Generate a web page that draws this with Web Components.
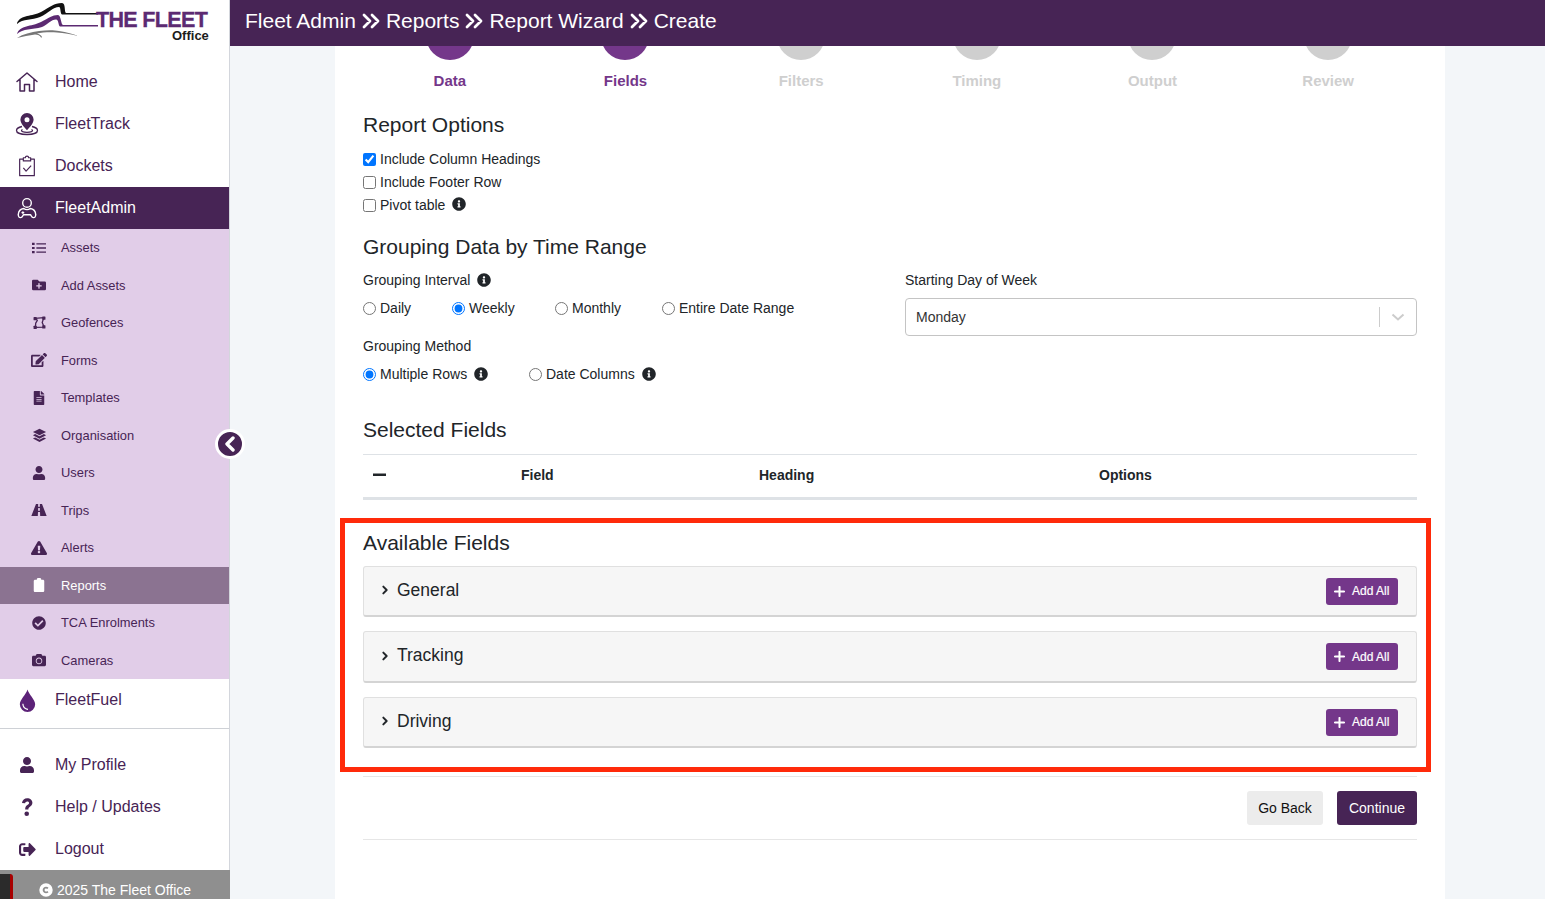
<!DOCTYPE html>
<html lang="en">
<head>
<meta charset="utf-8">
<title>Fleet Admin - Report Wizard</title>
<style>
  html, body { margin: 0; height: 100%; overflow: hidden; }
  body { font-family: "Liberation Sans", Arial, sans-serif; color: #212529; background: #f3f6f9; }
</style>
</head>
<body>
<app-shell>
  <side-bar slot="side"></side-bar>
  <top-bar slot="top">
    <span>Fleet Admin</span><span>Reports</span><span>Report Wizard</span><span>Create</span>
  </top-bar>
  <report-form></report-form>
</app-shell>

<script>
// font-awesome style solid icons, plus a few hand drawn outline ones
const ICONS = {
  home: ['0 0 24 24', '<path d="M2 11.500 12 3l10 8.500M5 9.500V21h4.500v-6.500h5V21H19V9.500" fill="none" stroke="currentColor" stroke-width="1.500" stroke-linejoin="round" stroke-linecap="round"/>'],
  track: ['0 0 24 24', '<path fill-rule="evenodd" d="M12 1a6.600 6.600 0 0 0-6.600 6.600c0 3.800 4.300 8.500 6.600 10.600 2.300-2.100 6.600-6.800 6.600-10.600A6.600 6.600 0 0 0 12 1zm0 4.200a2.500 2.500 0 1 1 0 5 2.500 2.500 0 0 1 0-5z"/><path d="M7 14.500c-3 .7-5.500 2-5.500 3.900 0 2.500 4.700 4.100 10.500 4.100s10.500-1.600 10.500-4.100c0-1.900-2.500-3.200-5.500-3.900M7.500 17.500c-.6.300-1 .7-1 1.100 0 1 2.500 1.800 5.500 1.800s5.500-.8 5.500-1.800c0-.4-.4-.8-1-1.100" fill="none" stroke="currentColor" stroke-width="1.300"/>'],
  docket: ['0 0 24 24', '<path d="M8 4.500H4v18h16v-18h-4M8 3h2.200a1.800 1.800 0 0 1 3.600 0H16v3.500H8zM8 14l3 3.500 5.500-6" fill="none" stroke="currentColor" stroke-width="1.300" stroke-linejoin="round"/>'],
  admin: ['0 0 24 24', '<circle cx="12" cy="6.500" r="4.700" fill="none" stroke="currentColor" stroke-width="1.500"/><path d="M8.500 12.500c-3.500.5-5.800 3-6 6.500-.2 2.300 1 3.500 2.500 3.500 1.700 0 2.200-1.500 3.200-3.200h7.600c1 1.700 1.500 3.200 3.200 3.200 1.500 0 2.700-1.200 2.500-3.500-.2-3.500-2.500-6-6-6.500-1 .9-2.200 1.300-3.500 1.300s-2.500-.4-3.500-1.300z" fill="none" stroke="currentColor" stroke-width="1.500" stroke-linejoin="round"/><path d="M6 17h3M7.500 15.500v3" stroke="currentColor" stroke-width="1.200"/>'],
  list: ['0 0 512 512', '<path d="M0 64h96v80H0zM0 216h96v80H0zM0 368h96v80H0zM160 80h352v48H160zM160 232h352v48H160zM160 384h352v48H160z"/>'],
  folder: ['0 0 512 512', '<path d="M464,128H272L208,64H48A48,48,0,0,0,0,112V400a48,48,0,0,0,48,48H464a48,48,0,0,0,48-48V176A48,48,0,0,0,464,128ZM359.5,296a16,16,0,0,1-16,16h-64v64a16,16,0,0,1-16,16h-16a16,16,0,0,1-16-16V312h-64a16,16,0,0,1-16-16V280a16,16,0,0,1,16-16h64V200a16,16,0,0,1,16-16h16a16,16,0,0,1,16,16v64h64a16,16,0,0,1,16,16Z"/>'],
  polygon: ['0 0 24 24', '<path d="M4 4.500 20 3l-3 9 3.500 8.500-16 .5.500-8 3-5z" fill="none" stroke="currentColor" stroke-width="2.400" stroke-linejoin="round"/><g><rect x="1" y="2" width="6" height="6" rx="1"/><rect x="17" y="1" width="6" height="6" rx="1"/><rect x="17" y="17" width="6" height="6" rx="1"/><rect x="1" y="18" width="6" height="6" rx="1"/></g>'],
  edit: ['0 0 576 512', '<path d="M402.6 83.2l90.2 90.2c3.8 3.8 3.8 10 0 13.8L274.4 405.6l-92.8 10.3c-12.4 1.4-22.9-9.1-21.5-21.5l10.3-92.8L388.8 83.2c3.8-3.8 10-3.8 13.8 0zm162-22.9l-48.8-48.8c-15.2-15.2-39.9-15.2-55.2 0l-35.4 35.4c-3.8 3.8-3.800 10 0 13.800l90.200 90.200c3.800 3.800 10 3.800 13.800 0l35.400-35.400c15.200-15.300 15.200-40 0-55.200zM384 346.200V448H64V128h229.800c3.200 0 6.200-1.300 8.500-3.500l40-40c7.600-7.600 2.200-20.500-8.500-20.500H48C21.500 64 0 85.500 0 112v352c0 26.500 21.500 48 48 48h352c26.500 0 48-21.500 48-48V306.200c0-10.700-12.900-16-20.500-8.500l-40 40c-2.200 2.300-3.500 5.300-3.500 8.500z"/>'],
  file: ['0 0 384 512', '<path d="M224 136V0H24C10.700 0 0 10.700 0 24v464c0 13.300 10.700 24 24 24h336c13.300 0 24-10.700 24-24V160H248c-13.200 0-24-10.800-24-24zm64 236c0 6.600-5.400 12-12 12H108c-6.600 0-12-5.400-12-12v-8c0-6.600 5.400-12 12-12h168c6.600 0 12 5.400 12 12v8zm0-64c0 6.600-5.400 12-12 12H108c-6.600 0-12-5.400-12-12v-8c0-6.600 5.400-12 12-12h168c6.600 0 12 5.400 12 12v8zm0-72v8c0 6.600-5.400 12-12 12H108c-6.600 0-12-5.400-12-12v-8c0-6.600 5.400-12 12-12h168c6.600 0 12 5.400 12 12zm96-114.100v6.100H256V0h6.100c6.400 0 12.500 2.500 17 7l97.900 98c4.500 4.500 7 10.600 7 16.900z"/>'],
  layers: ['0 0 24 24', '<path d="M12 1 1.500 6.300 12 11.600l10.500-5.300z"/><path d="M5 9.700 1.500 11.500 12 17l10.500-5.500L19 9.700l-7 3.600z"/><path d="M5 15 1.500 16.800 12 22.300l10.500-5.500L19 15l-7 3.600z"/>'],
  user: ['0 0 448 512', '<path d="M224 256c70.700 0 128-57.300 128-128S294.700 0 224 0 96 57.300 96 128s57.300 128 128 128zm89.600 32h-16.700c-22.200 10.200-46.900 16-72.900 16s-50.600-5.800-72.900-16h-16.700C60.200 288 0 348.200 0 422.400V464c0 26.500 21.500 48 48 48h352c26.500 0 48-21.500 48-48v-41.600c0-74.200-60.200-134.400-134.400-134.400z"/>'],
  road: ['0 0 24 24', '<path fill-rule="evenodd" d="M7.500 3H10.800L10.600 7h2.800L13.200 3H16.500L23.500 21H13.800L13.500 15h-3L10.200 21H.5zM10.800 9l-.2 4h2.800l-.2-4z"/>'],
  alert: ['0 0 576 512', '<path d="M569.517 440.013C587.975 472.007 564.806 512 527.940 512H48.054c-36.937 0-59.999-40.055-41.577-71.987L246.423 23.985c18.467-32.009 64.720-31.951 83.154 0l239.940 416.028zM288 354c-25.405 0-46 20.595-46 46s20.595 46 46 46 46-20.595 46-46-20.595-46-46-46zm-43.673-165.346l7.418 136c.347 6.364 5.609 11.346 11.982 11.346h48.546c6.373 0 11.635-4.982 11.982-11.346l7.418-136c.375-6.874-5.098-12.654-11.982-12.654h-63.383c-6.884 0-12.356 5.780-11.981 12.654z"/>'],
  clipboard: ['0 0 384 512', '<path d="M336 64h-64V48c0-26.500-21.500-48-48-48h-64c-26.500 0-48 21.500-48 48v16H48C21.500 64 0 85.500 0 112v352c0 26.500 21.500 48 48 48h288c26.500 0 48-21.500 48-48V112c0-26.500-21.500-48-48-48z"/>'],
  check: ['0 0 512 512', '<path d="M504 256c0 136.967-111.033 248-248 248S8 392.967 8 256 119.033 8 256 8s248 111.033 248 248zM227.314 387.314l184-184c6.248-6.248 6.248-16.379 0-22.627l-22.627-22.627c-6.248-6.249-16.379-6.249-22.628 0L216 308.118l-70.059-70.059c-6.248-6.248-16.379-6.248-22.628 0l-22.627 22.627c-6.248 6.248-6.248 16.379 0 22.627l104 104c6.249 6.249 16.379 6.249 22.628.001z"/>'],
  camera: ['0 0 512 512', '<path d="M512 144v288c0 26.500-21.500 48-48 48H48c-26.500 0-48-21.500-48-48V144c0-26.500 21.500-48 48-48h88l12.300-32.900c7-18.700 24.900-31.100 44.900-31.100h125.500c20 0 37.900 12.400 44.900 31.100L376 96h88c26.500 0 48 21.500 48 48zM376 288c0-66.200-53.800-120-120-120s-120 53.800-120 120 53.800 120 120 120 120-53.800 120-120zm-32 0c0 48.500-39.500 88-88 88s-88-39.500-88-88 39.500-88 88-88 88 39.500 88 88z"/>'],
  drop: ['0 0 24 24', '<path fill-rule="evenodd" d="M12 .5C10.500 6 4 11 4 16a8 8 0 0 0 16 0C20 11 13.500 6 12 .5zM7.800 15.500c0 3 2 5 4.700 5v1.300C9 21.800 6.600 19 6.600 15.500z"/>'],
  question: ['0 0 24 24', '<path d="M6.500 7.500C7 4.300 9.300 2.500 12.200 2.500c3.300 0 5.700 2 5.700 4.900 0 2.200-1.300 3.400-2.900 4.500-1.200.8-1.500 1.300-1.500 2.900h-3.500c0-2.600.7-3.700 2.400-4.900 1.200-.8 1.900-1.300 1.900-2.300 0-1-.8-1.700-2-1.700-1.300 0-2.100.8-2.400 2.100z"/><circle cx="11.700" cy="19.300" r="2.500"/>'],
  logout: ['0 0 512 512', '<path d="M497 273L329 441c-15 15-41 4.500-41-17v-96H152c-13.300 0-24-10.700-24-24v-96c0-13.300 10.700-24 24-24h136V88c0-21.400 25.900-32 41-17l168 168c9.300 9.400 9.300 24.600 0 34zM192 436v-40c0-6.600-5.400-12-12-12H96c-17.700 0-32-14.300-32-32V160c0-17.700 14.300-32 32-32h84c6.600 0 12-5.400 12-12V76c0-6.600-5.400-12-12-12H96c-53 0-96 43-96 96v192c0 53 43 96 96 96h84c6.600 0 12-5.400 12-12z"/>'],
  copyright: ['0 0 24 24', '<path fill-rule="evenodd" d="M12 .5a11.500 11.500 0 1 0 0 23 11.500 11.500 0 0 0 0-23zm0 6c1.800 0 3.300.7 4.300 1.800l-2 2c-.6-.6-1.300-.9-2.200-.9-1.500 0-2.600 1.100-2.600 2.600s1.100 2.600 2.600 2.600c.9 0 1.600-.3 2.200-.9l2 2c-1 1.100-2.500 1.800-4.300 1.800-3.200 0-5.700-2.400-5.700-5.500S8.800 6.500 12 6.500z"/>'],
  info: ['0 0 512 512', '<path d="M256 8C119.043 8 8 119.083 8 256c0 136.997 111.043 248 248 248s248-111.003 248-248C504 119.083 392.957 8 256 8zm0 110c23.196 0 42 18.804 42 42s-18.804 42-42 42-42-18.804-42-42 18.804-42 42-42zm56 254c0 6.627-5.373 12-12 12h-88c-6.627 0-12-5.373-12-12v-24c0-6.627 5.373-12 12-12h12v-64h-12c-6.627 0-12-5.373-12-12v-24c0-6.627 5.373-12 12-12h64c6.627 0 12 5.373 12 12v100h12c6.627 0 12 5.373 12 12v24z"/>'],
  doubleRight: ['0 0 18 16', '<path d="M2 2l6 6-6 6M10 2l6 6-6 6" fill="none" stroke="currentColor" stroke-width="2.800" stroke-linecap="round" stroke-linejoin="round"/>'],
  angleRight: ['0 0 10 12', '<path d="M3 2l4 4-4 4" fill="none" stroke="currentColor" stroke-width="2.400" stroke-linecap="round" stroke-linejoin="round"/>'],
  angleLeft: ['0 0 12 16', '<path d="M9 2 3 8l6 6" fill="none" stroke="currentColor" stroke-width="3.400" stroke-linecap="round" stroke-linejoin="round"/>'],
  plus: ['0 0 12 12', '<path d="M6 1v10M1 6h10" fill="none" stroke="currentColor" stroke-width="2.200" stroke-linecap="round"/>'],
  minus: ['0 0 14 4', '<path d="M0 .5h13v2.500H0z"/>']
};

class FaIcon extends HTMLElement {
  connectedCallback() {
    const [box, body] = ICONS[this.getAttribute('name')];
    const size = this.getAttribute('size') || 14;
    this.attachShadow({ mode: 'open' }).innerHTML = `
      <style>
        :host { display: inline-flex; align-items: center; justify-content: center; flex: none; }
        svg { display: block; fill: currentColor; }
      </style>
      <svg viewBox="${box}" width="${size}" height="${size}">${body}</svg>`;
  }
}
customElements.define('fa-icon', FaIcon);

class AppShell extends HTMLElement {
  constructor() {
    super();
    this.attachShadow({ mode: 'open' }).innerHTML = `
      <style>
        :host { display: flex; height: 899px; width: 1545px; }
        .right { flex: 1; min-width: 0; display: flex; flex-direction: column; }
        main { flex: 1; overflow: hidden; padding: 0 100px 0 105px; }
      </style>
      <slot name="side"></slot>
      <div class="right">
        <slot name="top"></slot>
        <main><slot></slot></main>
      </div>`;
  }
}
customElements.define('app-shell', AppShell);

class TopBar extends HTMLElement {
  connectedCallback() {
    // chevrons go between the crumbs
    const crumbs = [...this.querySelectorAll('span')].map(s => s.textContent);
    const row = crumbs.map(c => `<span>${c}</span>`).join('<fa-icon name="doubleRight" size="18"></fa-icon>');
    this.attachShadow({ mode: 'open' }).innerHTML = `
      <style>
        :host { display: flex; align-items: center; gap: 6px; height: 46px; flex: none; padding: 0 15px 4px;
          background: #472455; color: #fff; font-size: 21px; position: relative; z-index: 2; box-sizing: border-box; }
      </style>${row}`;
  }
}
customElements.define('top-bar', TopBar);

class NavItem extends HTMLElement {
  connectedCallback() {
    const sub = this.hasAttribute('sub');
    this.attachShadow({ mode: 'open' }).innerHTML = `
      <style>
        :host { display: flex; align-items: center; box-sizing: border-box; color: #472455; }
        :host(:not([sub])) { height: 42px; font-size: 16px; }
        :host([sub]) { height: 37.5px; font-size: 12.9px; }
        :host([active]) { background: #472455; color: #fff; }
        :host([current]) { background: #8b7391; color: #fff; }
        .ic { display: flex; justify-content: center; align-items: center; width: ${sub ? 17 : 24}px;
          margin-left: ${sub ? 30.5 : 15}px; margin-right: ${sub ? 13.5 : 16}px; }
        .ic.fuel { color: #5c2278; }
      </style>
      <div class="ic ${this.getAttribute('icon') === 'drop' ? 'fuel' : ''}"><fa-icon name="${this.getAttribute('icon')}" size="${this.getAttribute('size') || (sub ? 14 : 20)}"></fa-icon></div>
      <span><slot></slot></span>`;
  }
}
customElements.define('nav-item', NavItem);

class BrandLogo extends HTMLElement {
  constructor() {
    super();
    this.attachShadow({ mode: 'open' }).innerHTML = `
      <style>
        :host { display: block; position: relative; height: 61px; }
        svg { position: absolute; left: 14px; top: 2px; }
        .name { position: absolute; left: 96px; top: 11px; font: bold 21.5px/18px "Liberation Sans", Arial, sans-serif; color: #5c2a72; letter-spacing: -.65px; white-space: nowrap; -webkit-text-stroke: .3px #5c2a72; }
        .sub { position: absolute; left: 172px; top: 29px; font: bold 13px/14px "Liberation Sans", Arial, sans-serif; color: #1c1c1c; }
      </style>
      <svg width="84" height="38" viewBox="0 0 84 38">
        <path d="M3 21C7 12 18 15 27 10 36 5 40 1 48 1c4 0 2 9 4 10h43v1.400H48c-2-1-1-7.500-3-7.500-6 0-10 6-19 10-8 3.500-17 1.500-23 7z" fill="#111"/>
        <path d="M3 32C6 23 17 25 27 20 35 16 38 13 44 13c3 0 3 10 5 10h43v1.400H46c-2-1-1-7-4-7-5 0-8 5-14 7.500C18 28 9 26 3 32z" fill="#5c2a72"/>
        <path d="M3 36c6-4 14-6 22-7 8-1 15-1 20 0 8 1 14 3 19 5-7-2-14-3-21-3.500-8-.5-15 0-20 1 3 1 5 2 5 4h-1c-1-2-3-3-6-3-6 1-12 2-18 3.500z" fill="#777"/>
      </svg>
      <div class="name">THE FLEET</div>
      <div class="sub">Office</div>`;
  }
}
customElements.define('brand-logo', BrandLogo);

class SideBar extends HTMLElement {
  constructor() {
    super();
    const sub = [
      ['list', 'Assets'], ['folder', 'Add Assets'], ['polygon', 'Geofences', 13], ['edit', 'Forms', 16], ['file', 'Templates'],
      ['layers', 'Organisation', 15], ['user', 'Users'], ['road', 'Trips', 16], ['alert', 'Alerts', 16], ['clipboard', 'Reports'],
      ['check', 'TCA Enrolments'], ['camera', 'Cameras']
    ].map(([i, t, s]) => `<nav-item sub icon="${i}" ${s ? `size="${s}"` : ''} ${t === 'Reports' ? 'current' : ''}>${t}</nav-item>`).join('');
    this.attachShadow({ mode: 'open' }).innerHTML = `
      <style>
        :host { display: flex; flex-direction: column; width: 230px; height: 899px; flex: none; box-sizing: border-box;
          background: #fff; border-right: 1px solid #d3d6dc; position: relative; z-index: 3; }
        .subnav { background: #e1cde8; }
        hr { border: 0; border-top: 1px solid #ced1d6; margin: 7px 0 15px; }
        .foot { position: absolute; left: 0; right: -1px; bottom: 0; height: 29px; background: #8f8f8f; color: #fff;
          font-size: 14px; display: flex; align-items: center; justify-content: center; gap: 4px; padding-top: 10px; box-sizing: border-box; }
        .recorder { position: absolute; left: 0; bottom: 0; width: 10px; height: 25px; background: #2b2b2b;
          border-right: 3px solid #a80000; border-top-right-radius: 3px; }
        .collapse { position: absolute; left: 215px; top: 429px; width: 24px; height: 24px; border: 3px solid #fff; border-radius: 50%;
          background: #472455; color: #fff; display: flex; align-items: center; justify-content: center; }
      </style>
      <brand-logo></brand-logo>
      <nav-item icon="home" size="24">Home</nav-item>
      <nav-item icon="track" size="24">FleetTrack</nav-item>
      <nav-item icon="docket" size="22">Dockets</nav-item>
      <nav-item icon="admin" size="22" active>FleetAdmin</nav-item>
      <div class="subnav">${sub}</div>
      <nav-item icon="drop" size="23">FleetFuel</nav-item>
      <hr>
      <nav-item icon="user" size="16">My Profile</nav-item>
      <nav-item icon="question" size="22">Help / Updates</nav-item>
      <nav-item icon="logout" size="17">Logout</nav-item>
      <div class="foot"><fa-icon name="copyright" size="14"></fa-icon><span>2025 The Fleet Office</span></div>
      <div class="recorder"></div>
      <div class="collapse"><fa-icon name="angleLeft" size="16"></fa-icon></div>`;
  }
}
customElements.define('side-bar', SideBar);

class WizardSteps extends HTMLElement {
  constructor() {
    super();
    const steps = ['Data', 'Fields', 'Filters', 'Timing', 'Output', 'Review'];
    this.attachShadow({ mode: 'open' }).innerHTML = `
      <style>
        :host { display: grid; grid-template-columns: repeat(6, 1fr); margin: 0 1px 0 -1px; }
        .step { display: flex; flex-direction: column; align-items: center; color: #cfcfcf; font-weight: bold; font-size: 15px; line-height: 22px; }
        .dot { width: 48px; height: 48px; border-radius: 50%; background: #cfcfcf; margin: -34px 0 10px; }
        .on { color: #74378a; }
        .on .dot { background: #74378a; }
      </style>
      ${steps.map((s, i) => `<div class="step ${i < 2 ? 'on' : ''}"><div class="dot"></div>${s}</div>`).join('')}`;
  }
}
customElements.define('wizard-steps', WizardSteps);

class SectionTitle extends HTMLElement {
  constructor() {
    super();
    this.attachShadow({ mode: 'open' }).innerHTML = `
      <style>
        :host { display: block; height: 30px; font-size: 21px; line-height: 30px; color: #212529; }
      </style><slot></slot>`;
  }
}
customElements.define('section-title', SectionTitle);

// a native checkbox or radio with its label and optional info mark
class FormOption extends HTMLElement {
  connectedCallback() {
    const type = this.getAttribute('type');
    this.attachShadow({ mode: 'open' }).innerHTML = `
      <style>
        :host { display: flex; align-items: center; height: 23px; font-size: 14px; color: #212529; white-space: nowrap; }
        input { width: 13px; height: 13px; margin: 0 4px 0 0; flex: none; }
        :host([type=checkbox]) input { margin-top: 1px; }
        fa-icon { margin-left: 7px; }
        :host([type=checkbox]) fa-icon { margin-bottom: 2px; }
      </style>
      <input type="${type}" ${this.hasAttribute('checked') ? 'checked' : ''} ${type === 'radio' ? `name="${this.getAttribute('group')}"` : ''}>
      <span><slot></slot></span>
      ${this.hasAttribute('info') ? '<fa-icon name="info" size="14"></fa-icon>' : ''}`;
  }
}
customElements.define('form-option', FormOption);

class FieldLabel extends HTMLElement {
  connectedCallback() {
    this.attachShadow({ mode: 'open' }).innerHTML = `
      <style>
        :host { display: flex; align-items: center; height: 22px; font-size: 14px; color: #212529; }
        fa-icon { margin-left: 7px; }
      </style>
      <span><slot></slot></span>
      ${this.hasAttribute('info') ? '<fa-icon name="info" size="14"></fa-icon>' : ''}`;
  }
}
customElements.define('field-label', FieldLabel);

class SelectBox extends HTMLElement {
  constructor() {
    super();
    this.attachShadow({ mode: 'open' }).innerHTML = `
      <style>
        :host { display: flex; align-items: center; height: 38px; box-sizing: border-box; border: 1px solid #c4c4c4; border-radius: 4px;
          padding-left: 10px; font-size: 14px; color: #333; background: #fff; }
        span { flex: 1; }
        i { width: 1px; height: 20px; background: #ccc; }
        svg { margin: 0 11px; }
      </style>
      <span><slot></slot></span><i></i>
      <svg width="14" height="8" viewBox="0 0 14 8"><path d="M1.500 1.500 7 6.500l5.500-5" fill="none" stroke="#ccc" stroke-width="2"/></svg>`;
  }
}
customElements.define('select-box', SelectBox);

class FieldsTable extends HTMLElement {
  constructor() {
    super();
    this.attachShadow({ mode: 'open' }).innerHTML = `
      <style>
        :host { display: grid; grid-template-columns: 158px 238px 340px 1fr; align-items: center; height: 46px; box-sizing: border-box; padding-bottom: 2px;
          border-top: 1px solid #dee2e6; border-bottom: 3px solid #dee2e6; font-size: 14px; font-weight: bold; color: #212529; }
        div { display: flex; align-items: center; }
        fa-icon { margin-left: 10px; }
      </style>
      <div><fa-icon name="minus" size="14"></fa-icon></div><div>Field</div><div>Heading</div><div>Options</div>`;
  }
}
customElements.define('fields-table', FieldsTable);

class FieldGroup extends HTMLElement {
  connectedCallback() {
    this.attachShadow({ mode: 'open' }).innerHTML = `
      <style>
        :host { display: flex; align-items: center; height: 51px; box-sizing: border-box; border: 1px solid #e0e0e0; border-bottom: 2px solid #d4d4d4;
          border-radius: 3px; background: #f6f6f6; padding: 0 18px 2px 16px; color: #212529; font-size: 17.5px; }
        span { flex: 1; margin-left: 7px; }
        button { display: flex; align-items: center; gap: 7px; width: 72px; height: 27px; border: 0; border-radius: 3px; background: #74378a; color: #fff;
          padding: 0 0 0 8px; margin-top: 2px; font: 12px "Liberation Sans", Arial, sans-serif; -webkit-text-stroke: .2px #fff; }
      </style>
      <fa-icon name="angleRight" size="10"></fa-icon>
      <span><slot></slot></span>
      <button><fa-icon name="plus" size="11"></fa-icon>Add All</button>`;
  }
}
customElements.define('field-group', FieldGroup);

class ReportForm extends HTMLElement {
  constructor() {
    super();
    this.attachShadow({ mode: 'open' }).innerHTML = `
      <style>
        :host { display: block; height: 853px; box-sizing: border-box; background: #fff; padding: 0 28px; }
        .options { margin-top: 18px; }
        .checks { margin: 7px 0 16px; }
        .grouping { display: grid; grid-template-columns: 1fr 512px; margin-top: 7px; }
        .radios { display: flex; margin-top: 5px; height: 24px; align-items: center; }
        .method { margin-top: 15px; }
        select-box { margin-top: 7px; }
        .selected { margin: 29px 0 9px; }
        .available { position: relative; margin-top: 28px; }
        .available section-title { margin-bottom: 8px; }
        field-group + field-group { margin-top: 14px; }
        .mark { position: absolute; left: -23px; right: -14px; top: -10px; bottom: -24px; border: 5px solid #ff2a0a; pointer-events: none; }
        .actions { display: flex; justify-content: flex-end; gap: 14px; margin-top: 28px; padding: 14px 0; border: solid #e6e6e6; border-width: 1px 0; }
        button { height: 34px; border: 0; border-radius: 3px; padding: 0 0 1px; font: 14px "Liberation Sans", Arial, sans-serif; }
        .back { width: 76px; background: #ececec; color: #111; }
        .next { width: 80px; background: #472455; color: #fff; }
      </style>
      <wizard-steps></wizard-steps>

      <section-title class="options">Report Options</section-title>
      <div class="checks">
        <form-option type="checkbox" checked>Include Column Headings</form-option>
        <form-option type="checkbox">Include Footer Row</form-option>
        <form-option type="checkbox" info>Pivot table</form-option>
      </div>

      <section-title>Grouping Data by Time Range</section-title>
      <div class="grouping">
        <div>
          <field-label info>Grouping Interval</field-label>
          <div class="radios">
            <form-option type="radio" group="interval" style="width:89px">Daily</form-option>
            <form-option type="radio" group="interval" checked style="width:103px">Weekly</form-option>
            <form-option type="radio" group="interval" style="width:107px">Monthly</form-option>
            <form-option type="radio" group="interval">Entire Date Range</form-option>
          </div>
          <field-label class="method">Grouping Method</field-label>
          <div class="radios">
            <form-option type="radio" group="method" checked info style="width:166px">Multiple Rows</form-option>
            <form-option type="radio" group="method" info>Date Columns</form-option>
          </div>
        </div>
        <div>
          <field-label>Starting Day of Week</field-label>
          <select-box>Monday</select-box>
        </div>
      </div>

      <section-title class="selected">Selected Fields</section-title>
      <fields-table></fields-table>

      <div class="available">
        <section-title>Available Fields</section-title>
        <field-group>General</field-group>
        <field-group style="height:52px">Tracking</field-group>
        <field-group>Driving</field-group>
        <div class="mark"></div>
      </div>

      <div class="actions">
        <button class="back">Go Back</button>
        <button class="next">Continue</button>
      </div>`;
  }
}
customElements.define('report-form', ReportForm);
</script>
</body>
</html>
